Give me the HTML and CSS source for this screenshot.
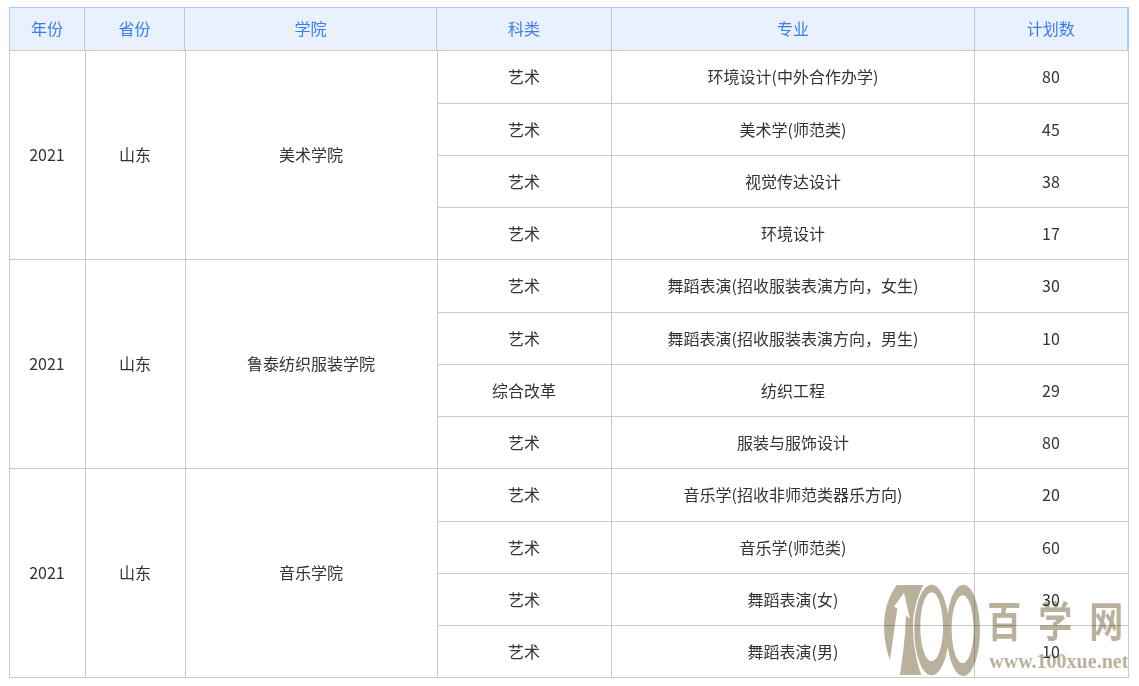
FILE: index.html
```html
<!DOCTYPE html>
<html lang="zh">
<head>
<meta charset="utf-8">
<title>招生计划</title>
<link rel="stylesheet" href="styles.css">
</head>
<body>
<div class="wrap">
<table class="head">
<colgroup><col class="h1"><col class="h2"><col class="h3"><col class="h4"><col class="h5"><col class="h6"></colgroup>
<tr><th>年份</th><th>省份</th><th>学院</th><th>科类</th><th>专业</th><th>计划数</th></tr>
</table>
<table class="body">
<colgroup><col class="c1"><col class="c2"><col class="c3"><col class="c4"><col class="c5"><col class="c6"></colgroup>
<tr><td rowspan="4">2021</td><td rowspan="4">山东</td><td rowspan="4">美术学院</td><td>艺术</td><td>环境设计(中外合作办学)</td><td>80</td></tr>
<tr><td>艺术</td><td>美术学(师范类)</td><td>45</td></tr>
<tr><td>艺术</td><td>视觉传达设计</td><td>38</td></tr>
<tr><td>艺术</td><td>环境设计</td><td>17</td></tr>
<tr><td rowspan="4">2021</td><td rowspan="4">山东</td><td rowspan="4">鲁泰纺织服装学院</td><td>艺术</td><td>舞蹈表演(招收服装表演方向，女生)</td><td>30</td></tr>
<tr><td>艺术</td><td>舞蹈表演(招收服装表演方向，男生)</td><td>10</td></tr>
<tr><td>综合改革</td><td>纺织工程</td><td>29</td></tr>
<tr><td>艺术</td><td>服装与服饰设计</td><td>80</td></tr>
<tr><td rowspan="4">2021</td><td rowspan="4">山东</td><td rowspan="4">音乐学院</td><td>艺术</td><td>音乐学(招收非师范类器乐方向)</td><td>20</td></tr>
<tr><td>艺术</td><td>音乐学(师范类)</td><td>60</td></tr>
<tr><td>艺术</td><td>舞蹈表演(女)</td><td>30</td></tr>
<tr><td>艺术</td><td>舞蹈表演(男)</td><td>10</td></tr>
</table>
<svg class="mark" viewBox="0 0 807 348" width="269" height="116" aria-label="百学网 www.100xue.net">
<g transform="translate(30 30)">
<path class="ink" d="M50 15H130C108 60 99 100 99 140C99 190 108 240 124 285H60C70 220 76 165 78 105L90 118L72 38L42 80L52 85L30 240C18 210 12 170 12 135C12 90 28 45 50 15Z"/>
<path class="ink" fill-rule="evenodd" d="M155 14C184 14 207 75 207 150C207 225 184 286 155 286C126 286 103 225 103 150C103 75 126 14 155 14ZM155 37C136 37 121 83 121 140C121 197 136 243 155 243C174 243 189 197 189 140C189 83 174 37 155 37Z"/>
<path class="ink" fill-rule="evenodd" d="M250 14C278 14 300 75 300 150C300 225 278 288 250 288C222 288 200 225 200 150C200 75 222 14 250 14ZM248 46C230 46 215 92 215 148C215 204 230 250 248 250C266 250 281 204 281 148C281 92 266 46 248 46Z"/>
</g>
<text class="cn" transform="translate(352 200) scale(1 1.25)">百学网</text>
<text class="url" x="358" y="295" textLength="417">www.100xue.net</text>
</svg>
</div>
</body>
</html>
```
FILE: styles.css
```css
* { box-sizing: border-box; }
html, body { margin: 0; background: #fff; }
body { font-family: "Noto Sans CJK SC", "Microsoft YaHei", sans-serif; font-size: 16px; color: #333; }
.wrap { position: relative; width: 1139px; height: 686px; padding: 7px 0 0 9px; overflow: hidden; }
table { border-collapse: collapse; table-layout: fixed; }
.head { width: 1118px; }
.body { width: 1119px; margin-top: -1px; }
.h1 { width: 75px; } .h2 { width: 100px; } .h3 { width: 252px; } .h4 { width: 175px; } .h5 { width: 363px; } .h6 { width: 153px; }
.c1 { width: 76px; } .c2 { width: 100px; } .c3 { width: 252px; } .c4 { width: 174px; } .c5 { width: 363px; } .c6 { width: 154px; }
th { height: 43px; padding: 0 0 2px; font-weight: 400; color: #3b7cf0; background: #e8f1fd; border: 1px solid #a8c9fb; text-align: center; line-height: 22px; }
th:last-child { border-right-width: 2px; }
td { height: 52px; padding: 0 1px 2px 0; border: 1px solid #c9c9c9; text-align: center; vertical-align: middle; line-height: 22px; }
td:nth-last-child(2) { padding-right: 0; }
td[rowspan] { padding-right: 1px; }
tr:nth-child(4n+1) td { height: 53px; }
.mark { position: absolute; left: 870px; top: 570px; mix-blend-mode: multiply; }
.ink { fill: #bab19d; }
.cn { font-family: "Noto Sans CJK SC", sans-serif; font-weight: 700; font-size: 102px; letter-spacing: 51px; fill: #bab19d; }
.url { font-family: "Liberation Serif", serif; font-weight: 700; font-size: 60px; fill: #bab19d; }
```
